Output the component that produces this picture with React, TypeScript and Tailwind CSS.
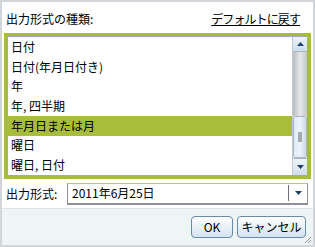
import React from 'react';

const items = ['日付', '日付(年月日付き)', '年', '年, 四半期', '年月日または月', '曜日', '曜日, 日付'];

const font = { fontFamily: '"MS UI Gothic", "Noto Sans CJK JP", "Liberation Sans", sans-serif' };

const Arrow: React.FC<{ up?: boolean }> = ({ up }) => (
  <svg width="7" height="4" viewBox="0 0 7 4">
    {up ? <path d="M0 4 L3.5 0 L7 4 Z" fill="#1f3f6b" /> : <path d="M0 0 L3.5 4 L7 0 Z" fill="#1f3f6b" />}
  </svg>
);

const App: React.FC = () => {
  return (
    <div
      className="w-[315px] h-[247px] border-2 border-[#d2d6da] bg-white flex flex-col text-[12px] text-black"
      style={font}
    >
      {/* header */}
      <div className="h-[31px] flex items-center justify-between pl-[4px] pr-[13px] pt-[2px]">
        <span>出力形式の種類:</span>
        <span className="underline tracking-[-0.9px]">デフォルトに戻す</span>
      </div>

      {/* list */}
      <div className="mx-[2px] h-[146px] border-[3px] border-[#a7bd3a]">
        <div className="h-full border border-[#a2a9b0] flex">
          <div className="flex-1 flex flex-col">
            {items.map((t, i) => (
              <div
                key={t}
                className={`h-[20px] flex items-center pl-[3px] ${i === 4 ? 'bg-[#a8bd3b]' : ''}`}
              >
                {t}
              </div>
            ))}
          </div>
          <div className="w-[15px] flex flex-col border-l border-[#c4c9ce]">
            <div className="h-[15px] flex items-center justify-center bg-gradient-to-b from-[#eef4fa] to-[#cfdeec] border-b border-[#a9b6c3]">
              <Arrow up />
            </div>
            <div className="flex-1 bg-gradient-to-r from-[#b9bdc1] via-[#e6e8ea] to-[#c4c8cc]" />
            <div className="h-[42px] flex items-center justify-center bg-gradient-to-r from-[#dfeaf4] via-[#eef4fa] to-[#c9dbeb] border border-[#a9b6c3] rounded-[2px]">
              <div className="w-[4px] h-[10px] bg-[#a5abb0]" />
            </div>
            <div className="h-[17px] flex items-center justify-center bg-gradient-to-b from-[#eef4fa] to-[#cfdeec] border-t border-[#a9b6c3]">
              <Arrow />
            </div>
          </div>
        </div>
      </div>

      {/* output row */}
      <div className="h-[29px] flex items-center pl-[4px] pr-[5px]">
        <span className="w-[61px]">出力形式:</span>
        <div className="flex-1 h-[22px] flex items-center border border-[#8d9197] border-t-[#b8bcc1] border-b-2 border-b-[#8d9197]">
          <span className="flex-1 pl-[4px]">2011年6月25日</span>
          <div className="w-px h-[16px] bg-[#6d7480]" />
          <div className="w-[18px] flex justify-center">
            <Arrow />
          </div>
        </div>
      </div>

      {/* footer */}
      <div className="flex-1 bg-[#eef5f5] border-t border-[#dfe4e6] flex items-center justify-end gap-[4px] pr-[7px] relative">
        <button className="w-[42px] h-[22px] rounded-[4px] border border-[#6b8aa6] bg-gradient-to-b from-[#ffffff] to-[#d3e3f1]">
          OK
        </button>
        <button className="w-[69px] h-[22px] rounded-[4px] border border-[#6b8aa6] bg-gradient-to-b from-[#ffffff] to-[#d3e3f1]">
          キャンセル
        </button>
        <svg className="absolute right-[1px] bottom-[1px]" width="8" height="8" viewBox="0 0 8 8">
          <path d="M7 1 L1 7 M7 4 L4 7" stroke="#8a9096" strokeWidth="1" />
        </svg>
      </div>
    </div>
  );
};

export default App;
